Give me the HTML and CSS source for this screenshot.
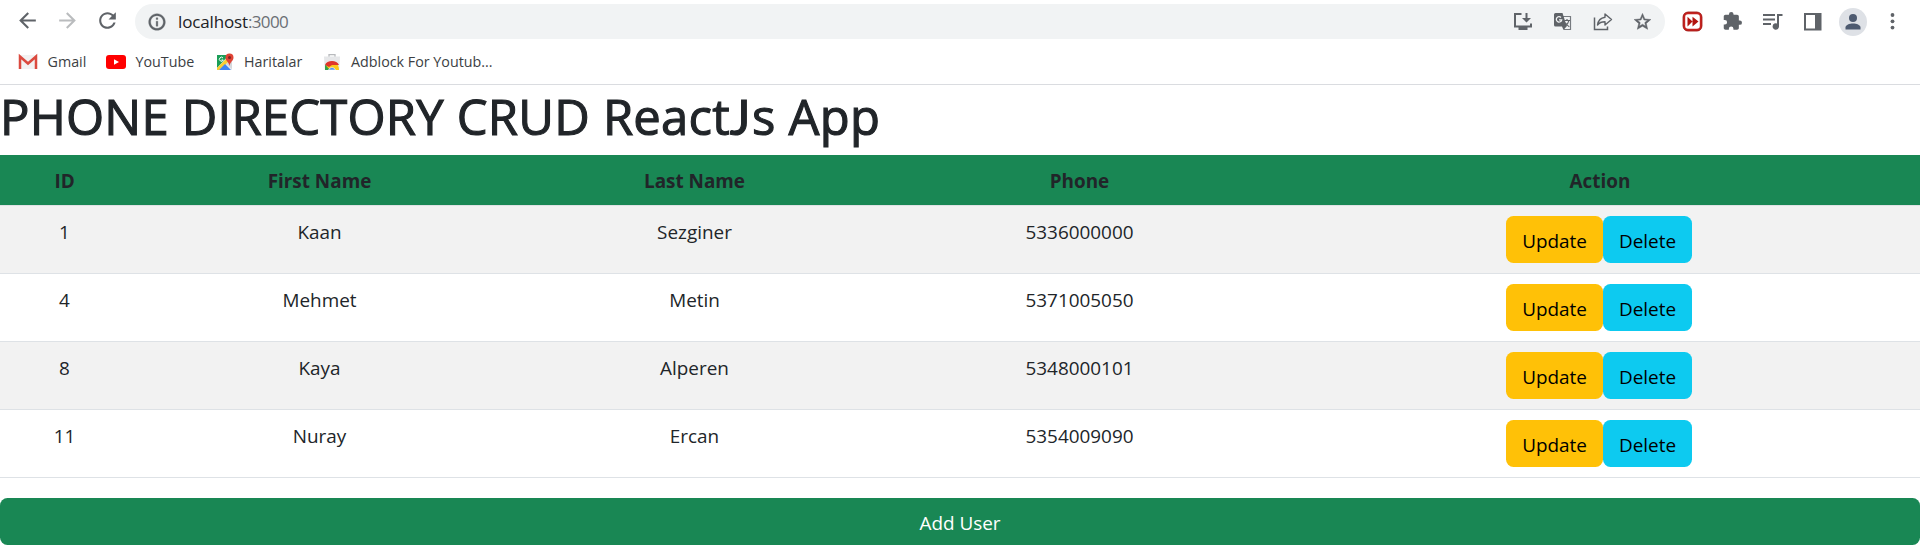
FILE: index.html
```html
<!DOCTYPE html>
<html lang="en">
<head>
<meta charset="utf-8">
<title>React App</title>
<link rel="stylesheet" href="styles.css">
</head>
<body>
<header class="browser">
  <div class="toolbar">
    <nav class="nav">
      <svg class="icon" viewBox="0 0 24 24"><path d="M20 11H7.83l5.59-5.59L12 4l-8 8 8 8 1.41-1.41L7.83 13H20v-2z"/></svg>
      <svg class="icon icon-off" viewBox="0 0 24 24"><path d="M12 4l-1.41 1.41L16.17 11H4v2h12.17l-5.58 5.59L12 20l8-8z"/></svg>
      <svg class="icon" viewBox="0 0 24 24"><path d="M17.65 6.35C16.2 4.9 14.21 4 12 4c-4.42 0-7.99 3.58-7.99 8s3.57 8 7.99 8c3.73 0 6.84-2.55 7.73-6h-2.08c-.82 2.33-3.04 4-5.65 4-3.31 0-6-2.69-6-6s2.69-6 6-6c1.66 0 3.14.69 4.22 1.78L13 11h7V4l-2.35 2.35z"/></svg>
    </nav>
    <div class="omnibox">
      <svg class="info" viewBox="0 0 24 24"><path d="M11 7h2v2h-2zm0 4h2v6h-2zm1-9C6.48 2 2 6.48 2 12s4.480 10 10 10 10-4.480 10-10S17.520 2 12 2zm0 17.600c-4.200 0-7.600-3.400-7.600-7.600S7.800 4.400 12 4.400s7.600 3.400 7.600 7.600-3.400 7.600-7.600 7.600z" stroke="#5f6368" stroke-width=".4"/></svg>
      <span class="url"><span class="host">localhost</span><span class="port">:3000</span></span>
      <div class="page-actions">
        <svg class="icon" viewBox="0 0 25 25"><path d="M11.500 5H5v12.500h16v-3" fill="none" stroke="#5f6368" stroke-width="2"/><path d="M8.500 18h9v3h-9zM15.500 4h2v5h3.500l-4.500 4.500L12 9h3.500z"/></svg>
        <svg class="icon" viewBox="0 0 25 25"><path d="M12 7.500h8.500v13H14" fill="none" stroke="#777b80" stroke-width="1.200"/><path d="M5.500 4h7l4.300 13.500H5.500A1.500 1.500 0 0 1 4 16V5.500A1.500 1.500 0 0 1 5.500 4zM12 17.500h4.500L13.500 21z"/><path d="M11 8.500a2.700 2.700 0 1 0 .7 2.300H9" fill="none" stroke="#f1f3f4" stroke-width="1.300"/><path d="M14.500 11.500H20M17 10v1.500m1.800 0c-.5 2.500-1.500 4-3 5.200m-.5-3c1 1.700 2.200 3 4 4" fill="none" stroke="#5f6368" stroke-width="1.200"/></svg>
        <svg class="icon" viewBox="0 0 25 25"><path d="M4.500 8.500v12h13v-3" fill="none" stroke="#5f6368" stroke-width="1.500"/><path d="M15 5l6.500 5.500L15 16v-3.200c-3.500 0-5.800 1-7.500 3.200.6-4.200 3-7.200 7.500-7.800z" fill="none" stroke="#5f6368" stroke-width="1.400" stroke-linejoin="round"/></svg>
        <svg class="icon" viewBox="0 0 24 24"><path d="M20 10.100l-5.750-.5L12 4.300 9.750 9.610 4 10.100l4.360 3.780L7.060 19.500 12 16.520l4.940 2.980-1.300-5.620L20 10.100zm-8 4.560l-3.010 1.820.8-3.420-2.660-2.300 3.500-.3L12 7.230l1.370 3.230 3.500.3-2.660 2.300.8 3.420L12 14.660z" stroke="#5f6368" stroke-width=".5"/></svg>
      </div>
    </div>
    <div class="extensions">
      <svg class="icon" viewBox="0 0 25 25"><rect x="4" y="4" width="17" height="17" rx="4" fill="#fff" stroke="#c5221f" stroke-width="2.400"/><rect x="3" y="3" width="19" height="19" rx="5" fill="none" stroke="#8e1b16" stroke-width=".5"/><path d="M7.500 7.700l5 4.800-5 4.900zM12.500 7.700l6 4.800-6 4.900z" fill="#b3140f"/></svg>
      <svg class="icon" viewBox="0 0 24 24"><path d="M19 11h-.9V7.300c0-.9-.8-1.700-1.700-1.700H13V5a2.200 2.200 0 0 0-4.400 0v.6H5.300c-.9 0-1.700.8-1.700 1.700v3.200h1a2.200 2.200 0 0 1 0 4.400h-1v3.300c0 .9.800 1.700 1.700 1.700h3.200v-.9a2.200 2.200 0 0 1 4.400 0v.9h3.500c.9 0 1.700-.8 1.700-1.700v-3H19a2.100 2.100 0 0 0 0-4.200z"/></svg>
      <svg class="icon" viewBox="0 0 25 25"><path d="M3 5h12v2H3zM3 9.500h12v2H3zM3 14h8v2H3zM17 5h5.500v2H19v10.500a3.200 3.200 0 1 1-2-3z"/></svg>
      <svg class="icon" viewBox="0 0 25 25"><path d="M4 4h17.500v17.500H4zM6 6v13.500h9V6z" fill-rule="evenodd"/></svg>
      <svg class="avatar" viewBox="0 0 28 28"><circle cx="14" cy="14" r="14" fill="#dee1e6"/><circle cx="14" cy="10" r="4" fill="#4d5a70"/><path d="M6.500 21.500v-2c0-2.500 4-4 7.500-4s7.500 1.500 7.500 4v2z" fill="#4d5a70"/></svg>
      <svg class="icon" viewBox="0 0 25 25"><circle cx="12.500" cy="6" r="1.900"/><circle cx="12.500" cy="12.300" r="1.900"/><circle cx="12.500" cy="18.600" r="1.900"/></svg>
    </div>
  </div>
  <div class="bookmarks">
    <a class="bookmark"><svg class="favicon" viewBox="0 0 20 20"><path d="M2 3h16v14H2z" fill="#f2f2f2"/><path d="M2 17V4.500l8 7 8-7V17" fill="none" stroke="#db4a3f" stroke-width="2.500"/></svg><span class="bm-gmail">Gmail</span></a>
    <a class="bookmark"><svg class="favicon" viewBox="0 0 20 20"><rect y="3" width="20" height="14" rx="3" fill="#f00"/><path d="M8 7.200l5 2.800-5 2.800z" fill="#fff"/></svg><span class="bm-youtube">YouTube</span></a>
    <a class="bookmark"><svg class="favicon" viewBox="0 0 20 20"><path d="M2 3h15v15H2z" fill="#e8eaed"/><path d="M2 3h12L2 16z" fill="#1b9e58"/><path d="M2 16L13 5l3 3L4 18H2z" fill="#fbce32"/><path d="M4 18l6-6 6 6z" fill="#4285f4"/><path d="M11 12l6 5v-7l-3-1z" fill="#d5d8dc"/><path d="M8 6a2 2 0 1 0 .3 2H6.500" fill="none" stroke="#fff"/><path d="M14.500 14c-.4-4-4-5-4-8.500a4 4 0 0 1 8 0c0 3.500-3.600 4.500-4 8.500z" fill="#e04335"/><circle cx="14.500" cy="5.500" r="1.500" fill="#7c2420"/></svg><span class="bm-maps">Haritalar</span></a>
    <a class="bookmark"><svg class="favicon" viewBox="0 0 20 20"><path d="M7 5V2.700h6V5" fill="none" stroke="#b8babd" stroke-width="1.300"/><path d="M2 4.500h16L17.200 18H2.800z" fill="#e6e7e9"/><path d="M3 18c-.5-5 3-8 7-8s7 3 7 8z" fill="#fbc91b"/><path d="M3 13c1.500-5 12-5.500 14 0h-7l-3 2z" fill="#e0352b"/><path d="M3 12.500L8 18H3z" fill="#34a048"/><path d="M6.500 18a3.700 3.700 0 0 1 7 0z" fill="#4a8df0" stroke="#fff" stroke-width=".6"/></svg><span class="bm-adblock">Adblock For Youtub...</span></a>
  </div>
</header>
<main class="app">
  <h1 class="title">PHONE DIRECTORY CRUD React<span class="title-j">J</span>s App</h1>
  <table class="table">
    <colgroup><col class="c-id"><col class="c-first"><col class="c-last"><col class="c-phone"><col class="c-action"></colgroup>
    <thead><tr><th>ID</th><th>First Name</th><th>Last Name</th><th>Phone</th><th>Action</th></tr></thead>
    <tbody>
      <tr><td>1</td><td>Kaan</td><td>Sezginer</td><td>5336000000</td><td><div class="actions"><button class="btn btn-warning">Update</button><button class="btn btn-info">Delete</button></div></td></tr>
      <tr><td>4</td><td>Mehmet</td><td>Metin</td><td>5371005050</td><td><div class="actions"><button class="btn btn-warning">Update</button><button class="btn btn-info">Delete</button></div></td></tr>
      <tr><td>8</td><td>Kaya</td><td>Alperen</td><td>5348000101</td><td><div class="actions"><button class="btn btn-warning">Update</button><button class="btn btn-info">Delete</button></div></td></tr>
      <tr><td>11</td><td>Nuray</td><td>Ercan</td><td>5354009090</td><td><div class="actions"><button class="btn btn-warning">Update</button><button class="btn btn-info">Delete</button></div></td></tr>
    </tbody>
  </table>
  <button class="btn btn-success">Add User</button>
</main>
</body>
</html>
```
FILE: styles.css
```css
* { box-sizing: border-box; }
body {
  margin: 0;
  background: #fff;
  color: #212529;
  font-family: "Open Sans", "Noto Sans", sans-serif;
  font-size: 18.900px;
  line-height: 30px;
}
svg { display: block; flex: none; }

.browser { height: 85px; border-bottom: 1px solid #dadce0; }
.toolbar { display: flex; height: 43px; padding: 4px 15px 4px 15px; }
.nav { display: flex; gap: 15px; width: 120px; padding-top: 4px; }
.icon { width: 25px; height: 25px; fill: #5f6368; }
.icon-off { fill: #babcbe; }
.omnibox {
  display: flex;
  align-items: center;
  width: 1530px;
  height: 35px;
  padding: 0 10px 0 12px;
  border-radius: 18px;
  background: #f1f3f4;
}
.info { width: 20px; height: 20px; fill: #5f6368; }
.url { margin-left: 11px; font-size: 17px; line-height: 33px; color: #202124; }
.host { letter-spacing: -0.15px; }
.port { color: #6b6f74; letter-spacing: -0.6px; }
.page-actions { display: flex; gap: 15px; margin-left: auto; }
.extensions { display: flex; align-items: center; gap: 15px; margin-left: 15px; }
.avatar { width: 28px; height: 28px; margin: 0 -2px 0 -1px; }

.bookmarks { display: flex; height: 37px; padding: 0 18px; align-items: center; }
.bookmark { display: flex; align-items: center; font-size: 14.300px; line-height: 20px; color: #3c4043; white-space: nowrap; }
.favicon { width: 20px; height: 20px; margin-right: 9.500px; }
.bm-gmail { width: 58.500px; }
.bm-youtube { width: 79px; }
.bm-maps { width: 77.500px; }

.title { margin: 0; padding: 0 0 9px; height: 70px; font-size: 49px; font-weight: 500; line-height: 62px; letter-spacing: 0.2px; white-space: nowrap; -webkit-text-stroke: 1.100px #212529; }
.title-j { font-family: Lato, "Open Sans", sans-serif; font-weight: 400; letter-spacing: 1.500px; }
.table { width: 1920px; margin-bottom: 20px; table-layout: fixed; border-collapse: separate; border-spacing: 0; text-align: center; }
.c-id { width: 129px; }
.c-first { width: 381px; }
.c-last { width: 369px; }
.c-phone { width: 401px; }
.c-action { width: 640px; }
.table th { height: 51px; padding: 11px 10px 9px; background: #198754; border-bottom: 1px solid #dfe2e5; font-weight: 700; }
.table td { height: 68px; padding: 11px 10px 9px; border-bottom: 1px solid #dee2e6; vertical-align: top; }
.table tbody tr:nth-child(odd) td { background: #f2f2f2; }
.actions { display: flex; justify-content: center; margin-top: -1px; padding-right: 2px; }
.btn { height: 47px; padding: 2px 0 0; border: 0; border-radius: 7.500px; font: inherit; color: #000; }
.btn-warning { width: 97px; background: #ffc107; }
.btn-info { width: 89px; background: #0dcaf0; }
.btn-success { display: block; width: 100%; background: #198754; color: #fff; }
```
